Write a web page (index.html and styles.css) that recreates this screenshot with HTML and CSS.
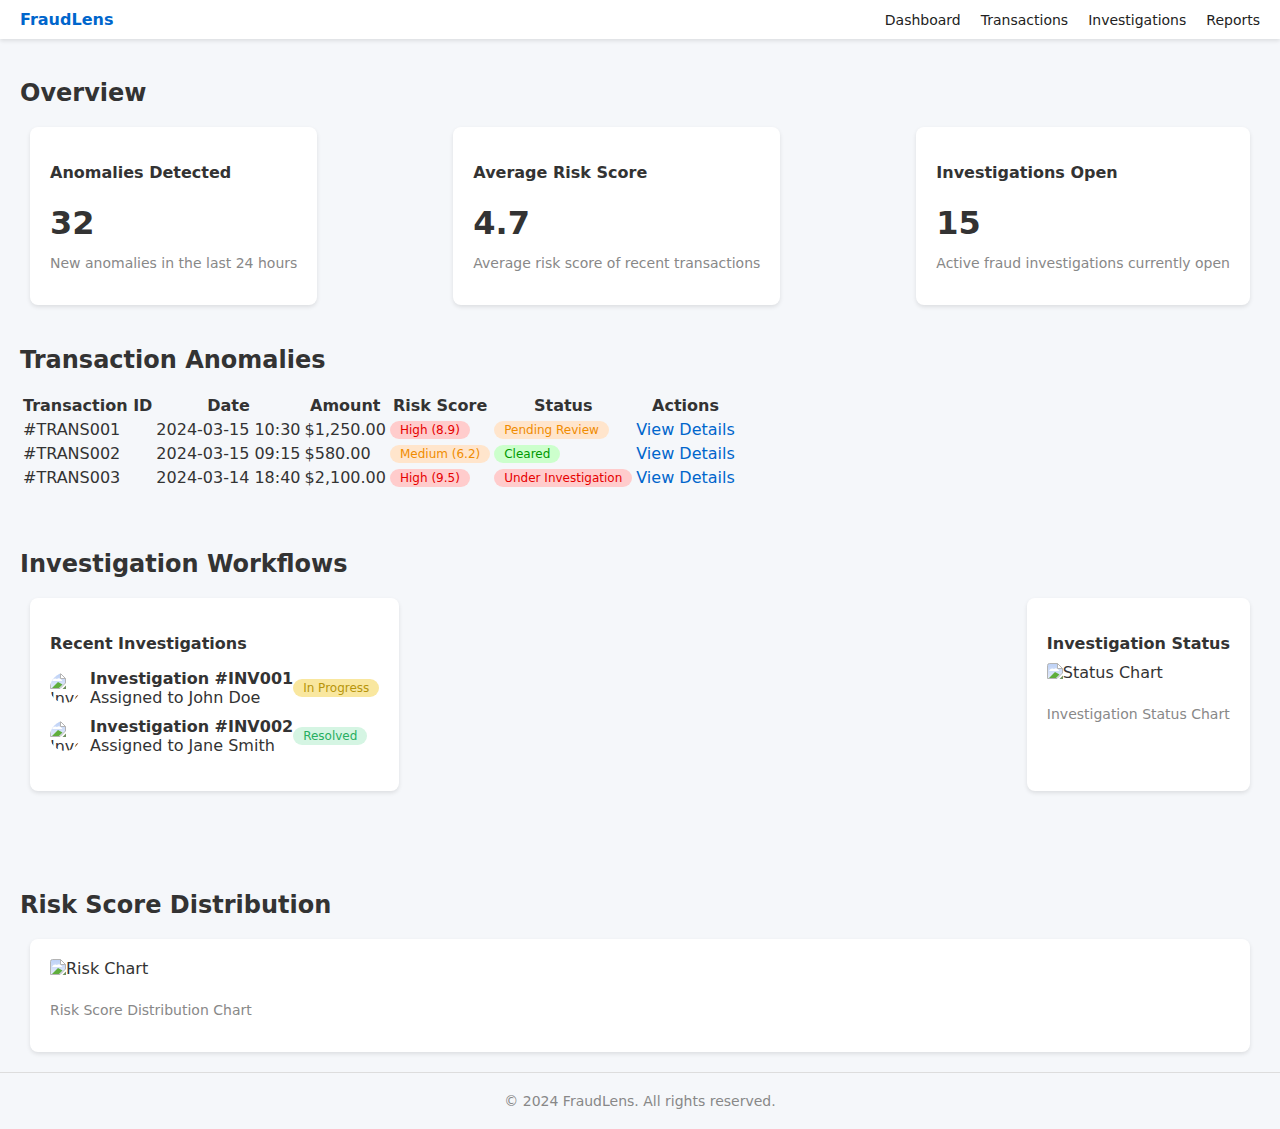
FILE: index.html
```html
<!DOCTYPE html>
<html lang="en">
<head>
<meta charset="utf-8">
<title>FraudLens</title>
<link rel="stylesheet" href="styles.css">
</head>
<body>
<svg class="sprite" width="0" height="0" aria-hidden="true"><defs>
<linearGradient id="sky" x1="0" y1="0" x2="0" y2="1"><stop offset="0" stop-color="#bcd0f5"/><stop offset="1" stop-color="#e4ecfc"/></linearGradient>
<symbol id="broken" viewBox="0 0 16 16">
<path d="M0.5 2.5 Q0.5 0.5 2.5 0.5 H10.5 L15.5 5.5 V10 L10 15.5 H0.5 Z" fill="url(#sky)" stroke="#b4b4b4" stroke-width="1"/>
<path d="M2 8 Q4 4.5 7 6 Q10 4 12.5 8 Z" fill="#ffffff"/>
<path d="M2 15 L8 9 L12.5 11.5 L9 15 Z" fill="#5fae3c"/>
<path d="M10.5 .5 V5.5 H15.5 Z" fill="#ffffff" stroke="#b4b4b4" stroke-width="1"/>
<path d="M12.5 16 L16 12.5 V16 Z" fill="#6f8f5f"/>
</symbol>
</defs></svg>
<header class="topbar">
  <a class="brand" href="#">FraudLens</a>
  <nav class="nav">
    <a href="#">Dashboard</a>
    <a href="#">Transactions</a>
    <a href="#">Investigations</a>
    <a href="#">Reports</a>
  </nav>
</header>
<main class="main">
  <section class="section section-overview">
    <h2>Overview</h2>
    <div class="row">
      <article class="card">
        <h3>Anomalies Detected</h3>
        <div class="metric">32</div>
        <p class="muted">New anomalies in the last 24 hours</p>
      </article>
      <article class="card">
        <h3>Average Risk Score</h3>
        <div class="metric">4.7</div>
        <p class="muted">Average risk score of recent transactions</p>
      </article>
      <article class="card">
        <h3>Investigations Open</h3>
        <div class="metric">15</div>
        <p class="muted">Active fraud investigations currently open</p>
      </article>
    </div>
  </section>
  <section class="section section-table">
    <h2>Transaction Anomalies</h2>
    <table class="table">
      <thead>
        <tr><th>Transaction ID</th><th>Date</th><th>Amount</th><th>Risk Score</th><th>Status</th><th>Actions</th></tr>
      </thead>
      <tbody>
        <tr><td>#TRANS001</td><td>2024-03-15 10:30</td><td>$1,250.00</td><td><span class="pill danger">High (8.9)</span></td><td><span class="pill warn">Pending Review</span></td><td><a href="#">View Details</a></td></tr>
        <tr><td>#TRANS002</td><td>2024-03-15 09:15</td><td>$580.00</td><td><span class="pill warn">Medium (6.2)</span></td><td><span class="pill ok">Cleared</span></td><td><a href="#">View Details</a></td></tr>
        <tr><td>#TRANS003</td><td>2024-03-14 18:40</td><td>$2,100.00</td><td><span class="pill danger">High (9.5)</span></td><td><span class="pill danger">Under Investigation</span></td><td><a href="#">View Details</a></td></tr>
      </tbody>
    </table>
  </section>
  <section class="section section-flows">
    <h2>Investigation Workflows</h2>
    <div class="row">
      <article class="card card-tall">
        <h3 class="list-title">Recent Investigations</h3>
        <ul class="inv-list">
          <li class="inv">
            <span class="avatar"><svg class="broken"><use href="#broken"/></svg><span class="avatar-alt">Inve</span></span>
            <div class="inv-body"><strong>Investigation #INV001</strong><span>Assigned to John Doe</span></div>
            <span class="pill progress">In Progress</span>
          </li>
          <li class="inv">
            <span class="avatar"><svg class="broken"><use href="#broken"/></svg><span class="avatar-alt">Inve</span></span>
            <div class="inv-body"><strong>Investigation #INV002</strong><span>Assigned to Jane Smith</span></div>
            <span class="pill resolved">Resolved</span>
          </li>
        </ul>
      </article>
      <article class="card card-tall">
        <h3 class="list-title status-title">Investigation Status</h3>
        <div class="chart-alt"><svg class="broken"><use href="#broken"/></svg>Status Chart</div>
        <p class="muted chart-note">Investigation Status Chart</p>
      </article>
    </div>
  </section>
  <section class="section section-risk">
    <h2>Risk Score Distribution</h2>
    <div class="row">
      <article class="card card-wide">
        <div class="chart-alt"><svg class="broken"><use href="#broken"/></svg>Risk Chart</div>
        <p class="muted chart-note">Risk Score Distribution Chart</p>
      </article>
    </div>
  </section>
</main>
<footer class="footer">© 2024 FraudLens. All rights reserved.</footer>
</body>
</html>
```
FILE: styles.css
```css
* { box-sizing: border-box; }
html, body { margin: 0; padding: 0; }
body {
  font-family: "DejaVu Sans", sans-serif;
  font-size: 16px;
  line-height: 1.2;
  color: #333;
  background: #f5f7fa;
}
a { color: #0066cc; text-decoration: none; }
.sprite { position: absolute; }
.topbar {
  height: 39px;
  padding: 1px 20px 0;
  display: flex;
  justify-content: space-between;
  align-items: center;
  background: #fff;
  box-shadow: 0 2px 4px rgba(0,0,0,.1);
}
.brand { font-size: 16px; font-weight: 700; }
.nav { display: flex; gap: 20px; }
.nav a { color: #222; font-size: 14px; }
.main { padding: 0 20px; }
h2 { margin: 0; font-size: 24px; line-height: 29px; font-weight: 700; color: #333; }
.section-overview { padding-top: 40px; }
.section-table { padding-top: 41px; }
.section-flows { padding-top: 59px; }
.section-risk { padding-top: 100px; }
.row { display: flex; justify-content: space-between; padding: 0 10px; margin-top: 19px; }
.card {
  background: #fff;
  border-radius: 8px;
  box-shadow: 0 2px 4px rgba(0,0,0,.1);
  padding: 20px;
}
.section-overview .card { height: 178px; padding-top: 36px; }
.card h3 { margin: 0; font-size: 16px; line-height: 19px; font-weight: 700; color: #333; }
.metric { margin-top: 22px; font-size: 32px; line-height: 38px; font-weight: 700; color: #333; }
.muted { margin: 0; font-size: 14px; line-height: 17px; color: #888; }
.metric + .muted { margin-top: 13px; }
.table { margin-top: 18px; border-spacing: 2px; border-collapse: separate; font-size: 16px; }
.table th { padding: 1px; line-height: 20px; font-weight: 700; text-align: center; }
.table td { padding: 1px; line-height: 20px; text-align: left; }
.pill {
  display: inline-block;
  padding: 0 10px;
  height: 18px;
  line-height: 18px;
  border-radius: 9px;
  font-size: 12px;
  vertical-align: 1px;
  white-space: nowrap;
}
.danger { background: #ffcccc; color: #e60000; }
.warn { background: #ffe5cc; color: #f08c00; }
.ok { background: #ccffcc; color: #009900; }
.progress { background: #f9e79f; color: #b7950b; }
.resolved { background: #d5f5e3; color: #27ae60; }
.card-tall { height: 193px; }
.list-title { margin-top: 16px !important; }
.inv-list { list-style: none; margin: 16px 0 0; padding: 0; display: flex; flex-direction: column; gap: 10px; }
.inv { display: flex; align-items: center; height: 38px; }
.avatar { width: 30px; height: 30px; margin-right: 10px; overflow: hidden; flex: none; display: block; border-radius: 50%; }
.avatar .broken { display: block; }
.avatar-alt { display: block; line-height: 19px; font-size: 16px; white-space: nowrap; }
.inv-body { display: flex; flex-direction: column; line-height: 19px; }
.inv-body strong { font-weight: 700; }
.broken { width: 16px; height: 16px; flex: none; }
.chart-alt { display: flex; align-items: flex-start; height: 19px; line-height: 19px; }
.status-title + .chart-alt { margin-top: 10px; }
.chart-note { margin-top: 24px; }
.card-wide { width: 100%; height: 113px; }
.footer {
  margin-top: 20px;
  height: 57px;
  border-top: 1px solid #ddd;
  padding-top: 20px;
  text-align: center;
  font-size: 14px;
  line-height: 17px;
  color: #888;
}
```
